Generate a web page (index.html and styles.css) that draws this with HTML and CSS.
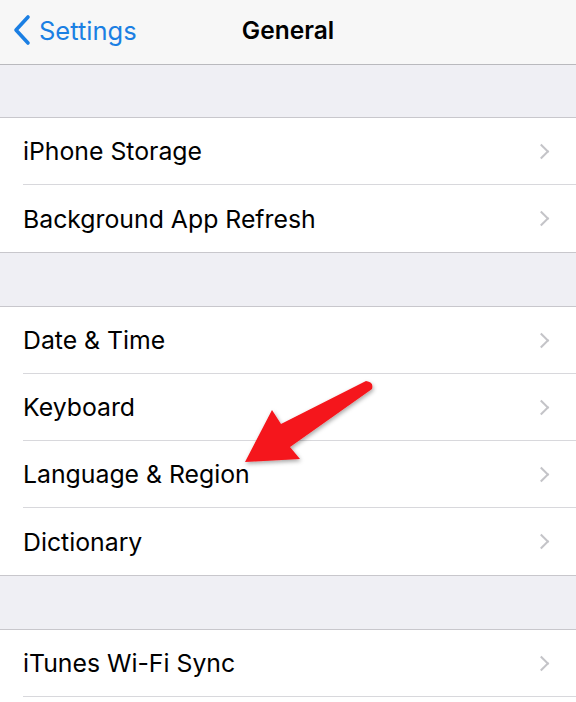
FILE: index.html
```html
<!DOCTYPE html>
<html>
<head>
<meta charset="utf-8">
<link rel="stylesheet" href="styles.css">
</head>
<body>
<div class="screen">
  <header class="nav">
    <div class="back">
      <svg class="back-icon" width="20" height="32" viewBox="0 0 20 32"><path d="M16 3 L4 16 L16 29" fill="none" stroke="#1b7fe3" stroke-width="3.6" stroke-linecap="round" stroke-linejoin="round"/></svg>
      <span>Settings</span>
    </div>
    <div class="title">General</div>
  </header>
  <div class="gap first"></div>
  <ul class="group">
    <li class="row"><span>iPhone Storage</span><i class="chev"></i></li>
    <li class="row"><span>Background App Refresh</span><i class="chev"></i></li>
  </ul>
  <div class="gap"></div>
  <ul class="group">
    <li class="row"><span>Date &amp; Time</span><i class="chev"></i></li>
    <li class="row"><span>Keyboard</span><i class="chev"></i></li>
    <li class="row"><span>Language &amp; Region</span><i class="chev"></i></li>
    <li class="row"><span>Dictionary</span><i class="chev"></i></li>
  </ul>
  <div class="gap"></div>
  <ul class="group open">
    <li class="row"><span>iTunes Wi-Fi Sync</span><i class="chev"></i></li>
    <li class="row"><span></span></li>
  </ul>
  <svg class="arrow" width="576" height="702" viewBox="0 0 576 702">
    <defs>
      <filter id="sh" x="-20%" y="-20%" width="140%" height="140%">
        <feDropShadow dx="1" dy="2" stdDeviation="2" flood-color="#000" flood-opacity="0.35"/>
      </filter>
    </defs>
    <path d="M366 381 Q374 382 372 389 L290 447 L300 459 L245 462 L272 410 L281 424 Z" fill="#f5141a" filter="url(#sh)"/>
  </svg>
</div>
</body>
</html>
```
FILE: styles.css
```css
* { box-sizing: border-box; }
html, body { margin: 0; padding: 0; }
body {
  width: 576px;
  height: 702px;
  overflow: hidden;
  background: #efeff4;
  font-family: Inter, Roboto, "Liberation Sans", sans-serif;
}
.screen { position: relative; width: 576px; height: 702px; overflow: hidden; }
.nav {
  height: 65px;
  background: #f7f7f7;
  border-bottom: 1px solid #b9b9bd;
  display: flex;
  align-items: center;
  justify-content: center;
  position: relative;
}
.back {
  position: absolute;
  left: 12px;
  top: 14px;
  display: flex;
  align-items: center;
  gap: 7px;
  color: #1b7fe3;
  font-size: 25.5px;
}
.title {
  font-size: 24.5px;
  font-weight: 600;
  color: #000;
  margin-bottom: 4px;
}
.gap { height: 53px; }
.gap.first { height: 52px; }
.group {
  list-style: none;
  margin: 0;
  padding: 0;
  background: #fff;
  border-top: 1px solid #c8c7cc;
  border-bottom: 1px solid #c8c7cc;
}
.group.open { border-bottom: none; }
.row {
  height: 67px;
  margin-left: 23px;
  padding-right: 23px;
  display: flex;
  align-items: center;
  justify-content: space-between;
  font-size: 24.8px;
  color: #000;
  border-bottom: 1px solid #d8d8dc;
}
.group .row:last-child { border-bottom: none; }
.group.open .row:first-child { border-bottom: 1px solid #d8d8dc; }
.chev {
  width: 11px;
  height: 11px;
  border-right: 2.5px solid #c4c4c8;
  border-top: 2.5px solid #c4c4c8;
  transform: rotate(45deg);
  margin-right: 6px;
}
.arrow { position: absolute; left: 0; top: 0; pointer-events: none; }
```
